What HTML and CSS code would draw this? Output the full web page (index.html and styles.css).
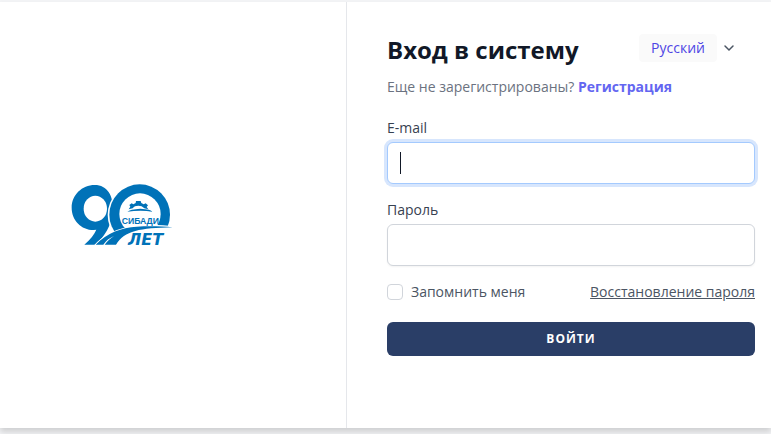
FILE: index.html
```html
<!DOCTYPE html>
<html lang="ru">
<head>
<meta charset="utf-8">
<meta name="viewport" content="width=device-width, initial-scale=1">
<title>Вход в систему</title>
<link rel="stylesheet" href="styles.css">
</head>
<body>
<main class="card">
  <section class="brand">
    <svg class="logo" viewBox="33 27 309 186" role="img" aria-label="СибАДИ 90 лет">
      <g fill="#0072b8">
        <path d="M104 30C66 30 35 60 35 98c0 37 28 67 66 67l8-1c-6 14-17 29-36 45h32c28-20 50-60 54-100C161 62 142 30 104 30z"/>
        <ellipse cx="106" cy="101" rx="35" ry="39" fill="#fff"/>
        <circle cx="239" cy="120" r="96" fill="#fff"/>
        <circle cx="239" cy="119" r="91"/>
        <circle cx="240" cy="117" r="62" fill="#fff"/>
        <path fill="#fff" d="M100 213C132 176 172 159 225 152 270 148 310 151 342 153V213z"/>
        <path d="M107 209C142 172 185 158 230 155c40-2 75-1 108 2-50 1-85 4-112 11-28 8-44 18-58 41h-34c8-10 16-18 28-26-14 6-24 14-32 26z"/>
        <path d="M202 110c10-5 18-7 25-7 8-2 20-2 28 0 8 0 15 2 23 7-23-4-50-4-76 0z"/>
        <path d="M206 103l5-8-3-5 7-5 5 3 7-4 1-6h14l2 6 7 4 6-3 7 6-4 5 5 7c-5-1-8-2-12-3-5-6-11-8-18-8s-14 2-17 8z"/>
      </g>
      <text class="logo-name" x="241" y="148" text-anchor="middle">СИБАДИ</text>
      <text class="logo-years" x="204" y="209">ЛЕТ</text>
    </svg>
  </section>
  <section class="panel">
    <header class="head">
      <h1>Вход в систему</h1>
      <button class="lang" type="button">
        <span class="lang-name">Русский</span>
        <svg class="chevron" viewBox="0 0 16 16" aria-hidden="true"><path d="M4 6l4 4 4-4"/></svg>
      </button>
    </header>
    <p class="hint">Еще не зарегистрированы? <a href="#register">Регистрация</a></p>
    <form class="form">
      <div class="field">
        <label for="email">E-mail</label>
        <input class="text" id="email" type="email" autofocus>
      </div>
      <div class="field">
        <label for="password">Пароль</label>
        <input class="text" id="password" type="password">
      </div>
      <div class="options">
        <label class="remember" for="remember"><input class="check" id="remember" type="checkbox"><span>Запомнить меня</span></label>
        <a class="forgot" href="#reset">Восстановление пароля</a>
      </div>
      <button class="submit" type="submit">Войти</button>
    </form>
  </section>
</main>
</body>
</html>
```
FILE: styles.css
```css
*, *::before, *::after { box-sizing: border-box; }
body {
  margin: 0;
  padding: 2px 0 6px;
  min-height: 100vh;
  display: flex;
  background: #f3f4f6;
  font: 14px/20px "Open Sans", sans-serif;
  color: #374151;
}
.card {
  flex: 1;
  display: grid;
  grid-template-columns: 347fr 424fr;
  background: #fff;
  box-shadow: 0 4px 6px rgba(0, 0, 0, .15);
}
.brand {
  display: flex;
  align-items: center;
  padding-left: 71px;
  border-right: 1px solid #e5e7eb;
}
.logo { display: block; width: 103px; height: 62px; overflow: visible; }
.logo-name { font: bold 26px "Liberation Sans", sans-serif; fill: #0072b8; }
.logo-years { font: italic bold 48px "DejaVu Sans", sans-serif; fill: #0072b8; }
.panel { padding: 32px 16px 32px 40px; }
.head { display: flex; justify-content: space-between; align-items: flex-start; }
h1 { margin: 0; font-size: 24px; line-height: 32px; font-weight: 700; color: #111827; }
.lang {
  display: flex;
  align-items: center;
  gap: 4px;
  margin-right: 18px;
  padding: 0;
  border: 0;
  background: none;
  font: inherit;
  color: #4f46e5;
}
.lang-name { padding: 4px 12px; border-radius: 4px; background: #fafafa; }
.chevron { width: 16px; height: 16px; fill: none; stroke: #4b5563; stroke-width: 1.5; stroke-linecap: round; }
.hint { margin: 11px 0 0; color: #6b7280; }
.hint a { font-weight: 700; color: #6366f1; text-decoration: none; }
.form { display: grid; gap: 16px; margin-top: 21px; }
.field { display: grid; gap: 4px; }
.text {
  width: 100%;
  height: 42px;
  padding: 8px 12px;
  border: 1px solid #d1d5db;
  border-radius: 6px;
  box-shadow: 0 1px 2px rgba(0, 0, 0, .05);
  font: 16px/24px "Open Sans", sans-serif;
  color: #111827;
}
.text:focus { outline: 0; border-color: #a4cafe; box-shadow: 0 0 0 3px #d7e6fd; }
/* Thin insertion mark in the focused, empty field */
#email:focus {
  background: linear-gradient(#111827, #111827) 12px center / 1px 22px no-repeat #fff;
  caret-color: transparent;
}
.options { display: flex; justify-content: space-between; align-items: center; }
.remember { display: flex; align-items: center; gap: 8px; color: #4b5563; }
.check {
  appearance: none;
  width: 16px;
  height: 16px;
  margin: 0;
  border: 1px solid #d1d5db;
  border-radius: 4px;
}
.check:checked { background: #4f46e5; }
.forgot { color: #4b5563; }
.submit {
  height: 34px;
  margin-top: 4px;
  border: 0;
  border-radius: 6px;
  background: #2a3e67;
  color: #fff;
  font: 700 12px/16px "Open Sans", sans-serif;
  letter-spacing: 1px;
  text-transform: uppercase;
}
```
